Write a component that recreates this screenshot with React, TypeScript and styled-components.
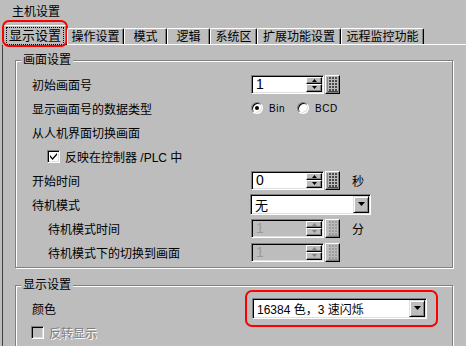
import React from 'react'
import styled, { createGlobalStyle } from 'styled-components'

const GlobalStyle = createGlobalStyle`
  html, body {
    margin: 0;
    padding: 0;
    background: #bdbdbd;
  }
  body {
    font-family: "Liberation Sans", "Noto Sans CJK SC", sans-serif;
    font-size: 12px;
    color: #000;
  }
`

const tabs = [
  { label: '显示设置', width: 64, active: true },
  { label: '操作设置', width: 57 },
  { label: '模式', width: 43 },
  { label: '逻辑', width: 43 },
  { label: '系统区', width: 47 },
  { label: '扩展功能设置', width: 84 },
  { label: '远程监控功能', width: 83 },
]

function SpinBox({ value, disabled }: { value: string; disabled?: boolean }) {
  return (
    <Field $width={73} $disabled={disabled}>
      <FieldValue $disabled={disabled}>{value}</FieldValue>
      <SpinColumn>
        <SpinButton>
          <svg width="5" height="3" viewBox="0 0 5 3">
            <path d="M2.5 0 L5 3 L0 3 Z" fill={disabled ? '#808080' : '#000'} />
          </svg>
        </SpinButton>
        <SpinButton>
          <svg width="5" height="3" viewBox="0 0 5 3">
            <path d="M0 0 L5 0 L2.5 3 Z" fill={disabled ? '#808080' : '#000'} />
          </svg>
        </SpinButton>
      </SpinColumn>
    </Field>
  )
}

function KeypadButton({ disabled }: { disabled?: boolean }) {
  const cell = disabled ? '#9c9c9c' : '#4a4a4a'
  const rows = [0, 1, 2, 3, 4]
  const cols = [0, 1, 2]
  return (
    <Keypad>
      <svg width="11" height="15" viewBox="0 0 11 15">
        {!disabled && <rect x="0" y="0" width="1" height="15" fill="#6f7fd8" />}
        {rows.map((r) =>
          cols.map((c) => <rect key={`${r}-${c}`} x={2 + c * 3} y={r * 3} width="2" height="2" fill={cell} />)
        )}
        <rect x="1" y="14" width="10" height="1" fill={cell} />
      </svg>
    </Keypad>
  )
}

function Dropdown({ value, width, size }: { value: string; width: number; size: number }) {
  return (
    <Field $width={width} $height={21}>
      <FieldValue $size={size}>{value}</FieldValue>
      <DropButton>
        <svg width="7" height="4" viewBox="0 0 7 4">
          <path d="M0 0 L7 0 L3.5 4 Z" fill="#000" />
        </svg>
      </DropButton>
    </Field>
  )
}

export default function App() {
  return (
    <Window>
      <GlobalStyle />
      <Title>主机设置</Title>
      <TabStrip>
        {tabs.map((t) => (
          <Tab key={t.label} $w={t.width} $active={t.active}>
            {t.active ? <FocusText>{t.label}</FocusText> : t.label}
            {t.active && <Highlight style={{ left: -2, right: -2, top: -6, bottom: -2 }} />}
          </Tab>
        ))}
      </TabStrip>
      <Panel>
        <Group $height={208}>
          <GroupTitle>画面设置</GroupTitle>
          <Row>
            <Label $indent={16}>初始画面号</Label>
            <Controls>
              <SpinBox value="1" />
              <KeypadButton />
            </Controls>
          </Row>
          <Row>
            <Label $indent={16}>显示画面号的数据类型</Label>
            <Controls>
              <RadioOption>
                <Radio $checked />
                Bin
              </RadioOption>
              <RadioOption>
                <Radio />
                BCD
              </RadioOption>
            </Controls>
          </Row>
          <Row>
            <Label $indent={16}>从人机界面切换画面</Label>
          </Row>
          <Row>
            <CheckLabel $indent={31}>
              <CheckBox>
                <svg width="9" height="9" viewBox="0 0 9 9">
                  <path d="M1 3 L3.5 6 L8 1 L8 3 L3.5 8 L1 5 Z" fill="#000" />
                </svg>
              </CheckBox>
              反映在控制器 /PLC 中
            </CheckLabel>
          </Row>
          <Row>
            <Label $indent={16}>开始时间</Label>
            <Controls>
              <SpinBox value="0" />
              <KeypadButton />
              <Unit>秒</Unit>
            </Controls>
          </Row>
          <Row>
            <Label $indent={16}>待机模式</Label>
            <Controls>
              <ShiftLeft>
                <Dropdown value="无" width={121} size={13} />
              </ShiftLeft>
            </Controls>
          </Row>
          <Row>
            <Label $indent={32}>待机模式时间</Label>
            <Controls>
              <SpinBox value="1" disabled />
              <KeypadButton disabled />
              <Unit>分</Unit>
            </Controls>
          </Row>
          <Row>
            <Label $indent={32}>待机模式下的切换到画面</Label>
            <Controls>
              <SpinBox value="1" disabled />
              <KeypadButton disabled />
            </Controls>
          </Row>
        </Group>

        <Group $height={90} $gap={17} $padTop={10}>
          <GroupTitle>显示设置</GroupTitle>
          <Row>
            <Label $indent={16}>颜色</Label>
            <Controls>
              <Marked>
                <Dropdown value="16384 色，3 速闪烁" width={175} size={12} />
                <Highlight style={{ left: -7, right: -11, top: -8, bottom: -8 }} />
              </Marked>
            </Controls>
          </Row>
          <Row>
            <CheckLabel $indent={15} $disabled>
              <CheckBox $disabled />
              反转显示
            </CheckLabel>
          </Row>
        </Group>
      </Panel>
    </Window>
  )
}

const Window = styled.div`
  width: 466px;
  height: 346px;
  overflow: hidden;
  background: #bdbdbd;
`

const Title = styled.div`
  height: 25px;
  line-height: 24px;
  padding-left: 12px;
`

const TabStrip = styled.div`
  position: relative;
  z-index: 1;
  display: flex;
  align-items: flex-end;
  height: 20px;
  padding-left: 3px;
`

const Tab = styled.div<{ $w: number; $active?: boolean }>`
  position: relative;
  box-sizing: border-box;
  width: ${(p) => p.$w}px;
  height: ${(p) => (p.$active ? 20 : 16)}px;
  margin-bottom: ${(p) => (p.$active ? 0 : 1)}px;
  display: flex;
  align-items: center;
  justify-content: center;
  border-top: 1px solid #fff;
  border-left: 1px solid #fff;
  border-right: 1px solid #000;
  border-radius: 2px 2px 0 0;
  box-shadow: inset -1px 0 #808080;
  background: #bdbdbd;
  font-size: ${(p) => (p.$active ? 13 : 12)}px;
  line-height: 14px;
  white-space: nowrap;
`

const FocusText = styled.span`
  outline: 1px dotted #000;
  outline-offset: 1px;
  padding: 0 1px;
`

const Highlight = styled.div`
  position: absolute;
  border: 2px solid #f00;
  border-radius: 7px;
  pointer-events: none;
`

const Panel = styled.div`
  margin-top: -1px;
  margin-left: 2px;
  height: 320px;
  border-top: 1px solid #fff;
  border-left: 1px solid #404040;
  padding: 15px 0 0 12px;
`

const Group = styled.div<{ $height: number; $gap?: number; $padTop?: number }>`
  position: relative;
  box-sizing: border-box;
  width: 438px;
  height: ${(p) => p.$height}px;
  margin-top: ${(p) => p.$gap ?? 0}px;
  padding-top: ${(p) => p.$padTop ?? 11}px;
  border: 1px solid #808080;
  box-shadow: inset 1px 1px #fff, 1px 1px #fff;
`

const GroupTitle = styled.div`
  position: absolute;
  top: -8px;
  left: 5px;
  padding: 0 2px;
  background: #bdbdbd;
  line-height: 14px;
`

const Row = styled.div`
  display: flex;
  align-items: center;
  height: 24px;
`

const Label = styled.div<{ $indent: number }>`
  box-sizing: border-box;
  width: 235px;
  padding-left: ${(p) => p.$indent}px;
  white-space: nowrap;
`

const CheckLabel = styled.div<{ $indent: number; $disabled?: boolean }>`
  display: flex;
  align-items: center;
  gap: 5px;
  padding-left: ${(p) => p.$indent}px;
  color: ${(p) => (p.$disabled ? '#808080' : '#000')};
  text-shadow: ${(p) => (p.$disabled ? '1px 1px #fff' : 'none')};
  white-space: nowrap;
`

const Controls = styled.div`
  display: flex;
  align-items: center;
`

const ShiftLeft = styled.div`
  margin-left: -1px;
`

const Marked = styled.div`
  position: relative;
  margin-left: 1px;
`

const Field = styled.div<{ $width: number; $height?: number; $disabled?: boolean }>`
  box-sizing: border-box;
  display: flex;
  width: ${(p) => p.$width}px;
  height: ${(p) => p.$height ?? 19}px;
  padding: 1px;
  border: 1px solid;
  border-color: #808080 #fff #fff #808080;
  box-shadow: inset 1px 1px #000, inset -1px -1px #dfdfdf;
  background: ${(p) => (p.$disabled ? '#bdbdbd' : '#fff')};
`

const FieldValue = styled.div<{ $disabled?: boolean; $size?: number }>`
  flex: 1;
  display: flex;
  align-items: center;
  padding-left: 3px;
  font-size: ${(p) => p.$size ?? 14}px;
  color: ${(p) => (p.$disabled ? '#9a9a9a' : '#000')};
  white-space: nowrap;
  overflow: hidden;
`

const SpinColumn = styled.div`
  display: flex;
  flex-direction: column;
  width: 16px;
`

const SpinButton = styled.div`
  box-sizing: border-box;
  flex: 1;
  display: flex;
  align-items: center;
  justify-content: center;
  background: #bdbdbd;
  border: 1px solid;
  border-color: #fff #000 #000 #fff;
  box-shadow: inset -1px -1px #808080;
`

const DropButton = styled.div`
  box-sizing: border-box;
  width: 16px;
  display: flex;
  align-items: center;
  justify-content: center;
  background: #bdbdbd;
  border: 1px solid;
  border-color: #dfdfdf #000 #000 #dfdfdf;
  box-shadow: inset 1px 1px #fff, inset -1px -1px #808080;
`

const Keypad = styled.div`
  box-sizing: border-box;
  width: 15px;
  height: 19px;
  margin-left: 1px;
  display: flex;
  align-items: center;
  justify-content: center;
  background: #bdbdbd;
  border: 1px solid;
  border-color: #fff #000 #000 #fff;
  box-shadow: inset -1px -1px #808080;
`

const Unit = styled.div`
  margin-left: 12px;
`

const RadioOption = styled.div`
  display: flex;
  align-items: center;
  gap: 6px;
  min-width: 46px;
  font-size: 10px;
  letter-spacing: 0.5px;
`

const Radio = styled.div<{ $checked?: boolean }>`
  position: relative;
  box-sizing: border-box;
  width: 12px;
  height: 12px;
  border-radius: 50%;
  border: 1px solid;
  border-color: #808080 #fff #fff #808080;
  background: #fff;
  box-shadow: inset 1px 1px #000, inset -1px -1px #dfdfdf;

  &::after {
    content: '';
    display: ${(p) => (p.$checked ? 'block' : 'none')};
    position: absolute;
    left: 3px;
    top: 3px;
    width: 4px;
    height: 4px;
    border-radius: 50%;
    background: #000;
  }
`

const CheckBox = styled.div<{ $disabled?: boolean }>`
  box-sizing: border-box;
  width: 13px;
  height: 13px;
  display: flex;
  align-items: center;
  justify-content: center;
  border: 1px solid;
  border-color: #808080 #fff #fff #808080;
  box-shadow: inset 1px 1px #000, inset -1px -1px #dfdfdf;
  background: ${(p) => (p.$disabled ? '#bdbdbd' : '#fff')};
`
